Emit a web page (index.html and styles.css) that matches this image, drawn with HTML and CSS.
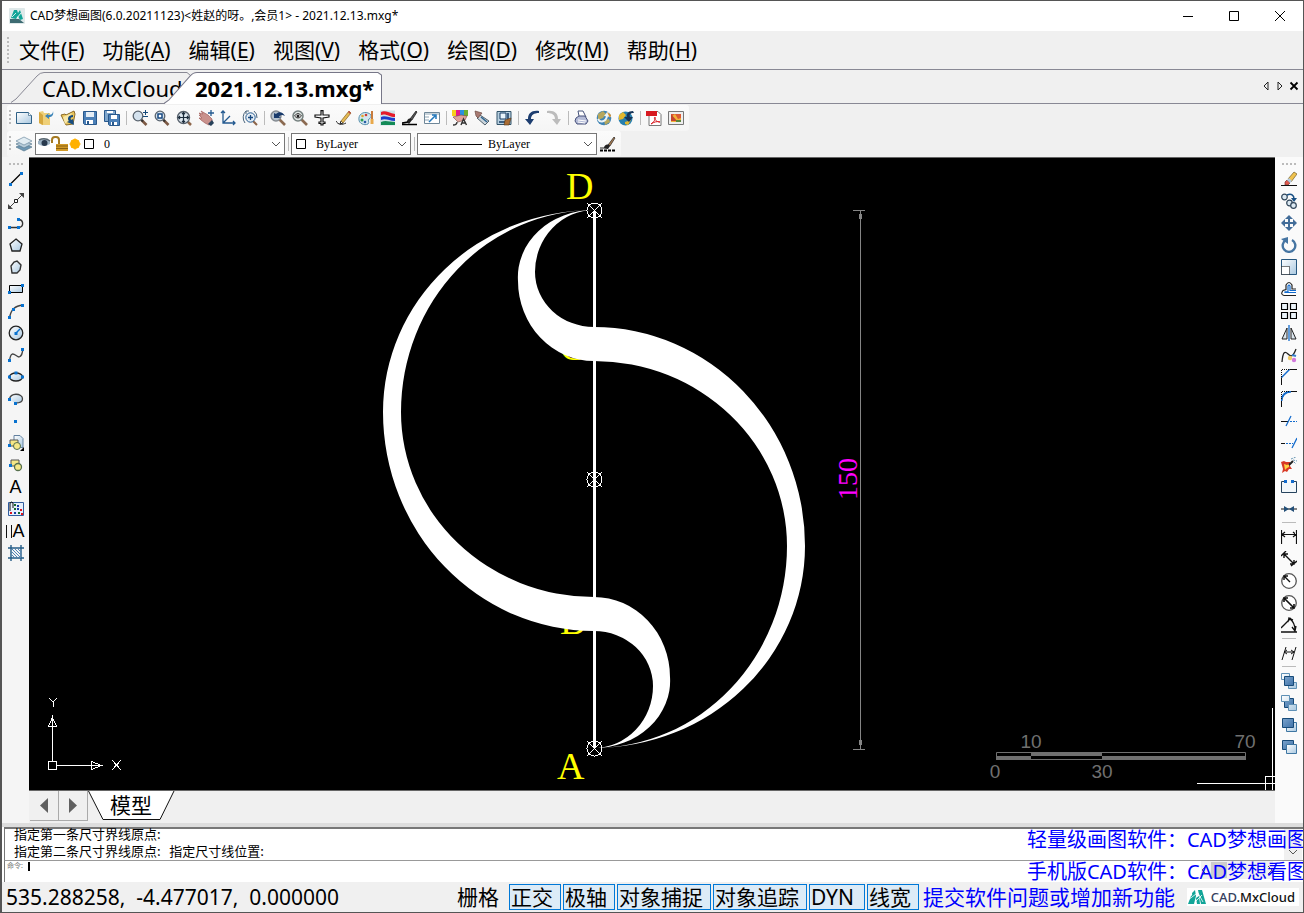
FILE: index.html
```html
<!DOCTYPE html>
<html lang="zh-CN">
<head>
<meta charset="utf-8">
<title>CAD梦想画图</title>
<link rel="stylesheet" href="styles.css">
</head>
<body>
<svg class="defs" aria-hidden="true">
  <defs>
    <linearGradient id="sky" x1="0" y1="0" x2="1" y2="1"><stop offset="0" stop-color="#fff"/><stop offset="1" stop-color="#a9c8e0"/></linearGradient>
    <linearGradient id="steel" x1="0" y1="0" x2="1" y2="1"><stop offset="0" stop-color="#7ba3cc"/><stop offset="1" stop-color="#3f72a8"/></linearGradient>
    <symbol id="lens" viewBox="0 0 16 16"><path d="M9.500 10l5 5" stroke="#7d5a45" stroke-width="2.600"/><path d="M9 9.500l2 2" stroke="#333" stroke-width="2"/><circle cx="6" cy="6" r="4.800" fill="#d4e2ee" stroke="#59636e" stroke-width="1.300"/></symbol>
    <symbol id="logo" viewBox="0 0 18 16"><path d="M0 15L3 7l3-2-1 10zM4 4l3-3 1 6-2 8H5zM10 1h4l4 14h-5zM8 9l3-2 1 8H9z" fill="#12a598"/><path d="M0 11l8-6M7 13l7-7M10 4l5 9" stroke="#fff" stroke-width=".8"/></symbol>
  </defs>
</svg>
<div class="window">
  <header class="titlebar">
    <svg class="appicon" viewBox="0 0 16 16"><rect width="16" height="16" rx="1" fill="#dfe9ea"/><path d="M2 10L5 2h3l1 3 2-3 3 9-3 1-2-4-2 3z" fill="#12a598"/><path d="M1 11h9l5 4H1z" fill="#3d6b72"/><path d="M3 9l4-4M8 10l4-5" stroke="#fff" stroke-width=".8"/></svg>
    <h1 class="title">CAD梦想画图(6.0.20211123)&lt;姓赵的呀。,会员1&gt; - 2021.12.13.mxg*</h1>
    <div class="wincontrols">
      <button aria-label="最小化"><svg viewBox="0 0 12 12"><path d="M1 6.500h10"/></svg></button>
      <button aria-label="最大化"><svg viewBox="0 0 12 12"><path d="M1.500 1.500h9v9h-9z"/></svg></button>
      <button aria-label="关闭"><svg viewBox="0 0 12 12"><path d="M1 1l10 10M11 1L1 11"/></svg></button>
    </div>
  </header>

  <nav class="menubar">
    <span class="grip"></span>
    <button>文件(<u>F</u>)</button><button>功能(<u>A</u>)</button><button>编辑(<u>E</u>)</button><button>视图(<u>V</u>)</button><button>格式(<u>O</u>)</button><button>绘图(<u>D</u>)</button><button>修改(<u>M</u>)</button><button>帮助(<u>H</u>)</button>
  </nav>

  <div class="tabstrip">
    <button class="tab tab-back"><svg viewBox="0 0 180 31" preserveAspectRatio="none"><path d="M0 31L5 27L26 4Q29 .5 33 .5H176L180 4V31z" fill="#f0f0f0"/><path d="M0 30.500L5 27L26 4Q29 .5 33 .5H176L180 4" fill="none" stroke="#888894"/></svg><span>CAD.MxCloud</span></button>
    <button class="tab tab-front"><svg viewBox="0 0 218 31" preserveAspectRatio="none"><path d="M0 31L5 27L26 4Q29 .5 33 .5H214L217.500 3V31z" fill="#fff"/><path d="M0 30.500L5 27L26 4Q29 .5 33 .5H214L217.500 3V31" fill="none" stroke="#777788"/></svg><span>2021.12.13.mxg*</span></button>
    <div class="tabnav">
      <button aria-label="上一个"><svg viewBox="0 0 10 10"><path d="M7 1v8L3 5z" fill="none" stroke="#222"/></svg></button>
      <button aria-label="下一个"><svg viewBox="0 0 10 10"><path d="M3 1v8l4-4z" fill="none" stroke="#222"/></svg></button>
      <button aria-label="关闭标签"><svg viewBox="0 0 10 10"><path d="M1.500 1.500l7 7M8.500 1.500l-7 7" stroke="#000" stroke-width="1.800"/></svg></button>
    </div>
  </div>

  <div class="toolrows">
  <div class="toolrow">
    <div class="toolbar">
      <span class="grip"></span>
      <button aria-label="新建"><svg viewBox="0 0 16 16"><path d="M.5 2.500h12l3 3v8H.5z" fill="url(#sky)" stroke="#2f6187"/><path d="M12.500 2.500v3h3" fill="#fff" stroke="#2f6187" stroke-width=".7"/></svg></button>
      <button aria-label="打开"><svg viewBox="0 0 16 16"><path d="M1 2l4-1 1 2h6v12H4l-3-2z" fill="#efd078"/><path d="M1 2l4 3v10l-4-2z" fill="#d6a83f"/><path d="M15 1c0 3-2 4-5 4l1-2-4 3 4 3v-2c3 0 5-2 4-6z" fill="#3a83b8"/></svg></button>
      <button aria-label="打开云图"><svg viewBox="0 0 16 16"><path d="M1 5l4-1 1 1 8-4 1 3-2 10-7 1z" fill="#e8c55e" stroke="#8b6a25"/><path d="M3 7l9-4-3 7-4 4z" fill="#f8e8a8"/><path d="M13 5c-5 0-6 4-4 6l-2 1 7 3-1-6-2 1c-1-2 0-3 2-3z" fill="#164c80"/></svg></button>
      <button aria-label="保存"><svg viewBox="0 0 16 16"><path d="M1.500 1.500h13v13h-12l-1-1z" fill="#4b80b8" stroke="#28588c"/><path d="M4 2h8v5H4z" fill="#e4edf5"/><path d="M4 10h7v4H4z" fill="#fff"/><path d="M5 11h2v3H5z" fill="#28588c"/></svg></button>
      <button aria-label="另存为"><svg viewBox="0 0 16 16"><path d="M.5 .5h11v11H.5z" fill="#7fa6cc" stroke="#28588c"/><path d="M3 1h6v2H3z" fill="#fff"/><path d="M4.500 4.500h11v11h-10l-1-1z" fill="#4b80b8" stroke="#28588c"/><path d="M7 5h6v4H7zM7 12h6v3H7z" fill="#fff"/><path d="M8 12h2v3H8z" fill="#28588c"/></svg></button>
      <i class="sep"></i>
      <button aria-label="实时缩放"><svg viewBox="0 0 16 16"><use href="#lens"/><path d="M11 2.500h5M13.500 0v5M11 6.500h5" stroke="#164a7a"/></svg></button>
      <button aria-label="窗口缩放"><svg viewBox="0 0 16 16"><use href="#lens"/><path d="M4 4h4v4H4z" fill="#fff" stroke="#174a82" stroke-width="1.500"/></svg></button>
      <button aria-label="范围缩放"><svg viewBox="0 0 16 16"><path d="M11 11l4 4" stroke="#8d6549" stroke-width="2.500"/><circle cx="7.500" cy="7.500" r="6" fill="#dce6ee" stroke="#555f6a" stroke-width="1.400"/><path d="M7.500 3v9M3 7.500h9M6 4l1.500-1.500L9 4M6 11l1.500 1.500L9 11M4 6L2.500 7.500L4 9M11 6l1.500 1.500L11 9" fill="none" stroke="#1b2c3c" stroke-width="1.200"/></svg></button>
      <button aria-label="平移"><svg viewBox="0 0 16 16"><path d="M1 3l4 1-2-3 7 4 1 1 3 3 0 4-3 2-4-2-4-3-2-2 3 0-3-3 2 0z" fill="#c9918c" stroke="#a35f5b" stroke-width=".7"/><path d="M13 0v6M10 3h6" stroke="#245a90" stroke-width="1.300"/><path d="M10 14l4-4 2 3-3 3z" fill="#27415a"/></svg></button>
      <button aria-label="坐标系"><svg viewBox="0 0 16 16"><path d="M3 1v12h12M3 13l7-7M1 3l2-2 2 2M13 11l2 2-2 2" fill="none" stroke="#245a90" stroke-width="1.300"/></svg></button>
      <button aria-label="缩放上一个"><svg viewBox="0 0 16 16"><path d="M11 11l4 4" stroke="#8d6549" stroke-width="2"/><circle cx="8.500" cy="7.500" r="4.700" fill="#e4edf4" stroke="#245a90"/><path d="M8.500 5v5M6 7.500h5" stroke="#174a82" stroke-width="1.300"/><path d="M4 1a9 9 0 0 0-1 12M4 1h3M4 1v3M12 1a8 8 0 0 1 3 7" fill="none" stroke="#49647c"/></svg></button>
      <i class="sep"></i>
      <button aria-label="返回视图"><svg viewBox="0 0 16 16"><path d="M9 9l6 6" stroke="#8b6a51" stroke-width="2.600"/><circle cx="6" cy="6" r="5" fill="#b6c3ce" stroke="#858b91" stroke-width="1.400"/><path d="M4 8L4 3l2 1c3-3 7-2 9 2-3-2-5-1-6 1l2 1z" fill="#193b6c"/></svg></button>
      <button aria-label="动态观察"><svg viewBox="0 0 16 16"><path d="M9 9l6 6" stroke="#8b6a51" stroke-width="2.600"/><circle cx="6" cy="6" r="5" fill="#e2e8e6" stroke="#75807f" stroke-width="1.500"/><path d="M2.500 6q3.500-5 7 0q-3.500 4-7 0z" fill="#fff" stroke="#333"/><circle cx="6" cy="6" r="1.500" fill="#222"/></svg></button>
      <button aria-label="飞行"><svg viewBox="0 0 16 16"><path d="M7 .6h2V5h6v2l-6 1v4h2v1.500H9V15H7v-1.500H5V12h2V8L1 7V5h6z" fill="#fff" stroke="#111" stroke-width="1.200"/></svg></button>
      <button aria-label="铅笔"><svg viewBox="0 0 16 16"><path d="M5 11L13 1l2 2-8 10z" fill="#e4ba54" stroke="#85601f" stroke-width=".7"/><path d="M12 2l1-1 2 2-1 1z" fill="#b44"/><path d="M5 11l-1 3 3-1M0 11c2 4 6 4 10 2" fill="none" stroke="#222"/></svg></button>
      <button aria-label="调色板"><svg viewBox="0 0 16 16"><path d="M1 10C0 5 5 1 10 3c4 1 4 5 1 6-2 1 1 3-1 5-4 2-9-1-9-4z" fill="#d3e6ef" stroke="#5690ad"/><circle cx="4" cy="10" r="1.500" fill="#2b9d52"/><circle cx="4.500" cy="6" r="1.300" fill="#e4a52b"/><circle cx="8" cy="5" r="1.300" fill="#cc3d35"/><circle cx="7" cy="12" r="1.300" fill="#265ca6"/><path d="M14 1v8" stroke="#c87b3d" stroke-width="2"/><path d="M14 9v5" stroke="#e8a84a" stroke-width="3"/></svg></button>
      <button aria-label="图层颜色"><svg viewBox="0 0 16 16"><path d="M0 .5h15v15H0z" fill="#cfe2e8"/><path d="M1 2c4-2 8 1 14 2v3C9 7 6 3 1 5z" fill="#e51b2b"/><path d="M1 7c4-2 8 1 14 1v3C9 11 6 8 1 10z" fill="#1d3dcc"/><path d="M1 12c5-2 8 0 14 0v3H1z" fill="#138a57"/></svg></button>
      <button aria-label="笔刷"><svg viewBox="0 0 16 16"><path d="M8 9l6-8 1 1-5 8z" fill="#555" stroke="#111" stroke-width=".7"/><path d="M5 12c0-3 3-5 5-2l-3 4z" fill="#222"/><path d="M0 14.500h15M0 13l6-1" stroke="#000" stroke-width="1.500"/></svg></button>
      <button aria-label="窗口"><svg viewBox="0 0 16 16"><path d="M.5 2.500h15v11H.5z" fill="#fff" stroke="#6f8798"/><path d="M1 4h14M1 7h4M1 10h4" stroke="#8fa6b5"/><path d="M5 12l6-6M8 5h4v4" fill="none" stroke="#2277bb" stroke-width="1.500"/></svg></button>
      <i class="sep"></i>
      <button aria-label="选择颜色"><svg viewBox="0 0 16 16"><path d="M0 0h4v6H0z" fill="#f6cf1b"/><path d="M4 0h4v6H4z" fill="#e5188c"/><path d="M8 0h4v6H8z" fill="#2a8fe0"/><path d="M12 0h4v6h-4z" fill="#6cae2f"/><path d="M1 7l8-2 6 1-2 4-7 2z" fill="#e1a19a" stroke="#754944" stroke-width=".6"/><path d="M9 15l2.500-6 3 6M10 13h3.500M1 15c3 0 4-1 4-3" fill="none" stroke="#333" stroke-width="1.400"/></svg></button>
      <button aria-label="橡皮"><svg viewBox="0 0 16 16"><path d="M6 5l9 6-4 4-8-7z" fill="#cbd5dc" stroke="#52616b"/><path d="M1 1l7 2-4 5-2-2z" fill="#a87a72" stroke="#6b4a44" stroke-width=".7"/><path d="M7 7l6 5" stroke="#2c638f" stroke-width="1.500"/></svg></button>
      <button aria-label="特性"><svg viewBox="0 0 16 16"><path d="M1 1.500h14v13H1z" fill="#b6cfdf" stroke="#31536a"/><path d="M4 3h6v6H4z" fill="#e9f5fb" stroke="#163b63"/><path d="M12 3v7M3 12h6" stroke="#163b63" stroke-width="1.500"/><path d="M9 10l6-2-2 7H8z" fill="#a96c34" stroke="#513316" stroke-width=".6"/></svg></button>
      <i class="sep"></i>
      <button aria-label="撤销"><svg viewBox="0 0 16 16"><path d="M15 1C8 0 4 3 4 9H1l5 6 4-6H7c0-4 3-6 8-6z" fill="#1d3e70"/></svg></button>
      <button aria-label="重做"><svg viewBox="0 0 16 16"><path d="M1 1c7-1 11 2 11 8h3l-4 6-5-6h3C9 5 6 3 1 3z" fill="#bcbcbc"/></svg></button>
      <i class="sep"></i>
      <button aria-label="打印"><svg viewBox="0 0 16 16"><path d="M5 6L4 1h5l3 6" fill="#fff" stroke="#47547b"/><path d="M2 8l3-2h6l3 5-2 3-9 0-2-3z" fill="#b4bbd7" stroke="#46507a"/><path d="M4 10l8 1M4 12l7 1" stroke="#fff"/></svg></button>
      <button aria-label="网络上传"><svg viewBox="0 0 16 16"><circle cx="8" cy="8" r="7.300" fill="#3f83b4"/><path d="M2 4l5-3 3 3-3 4-5 2zM8 10l5-1 1 3-5 3z" fill="#b6a75d"/><path d="M2 9c2 4 8 3 9-3" fill="none" stroke="#edf3f4" stroke-width="2"/><path d="M8 6l4-5 3 6z" fill="#edf3f4"/><path d="M11 2l4 3-1 3z" fill="#da8d21"/></svg></button>
      <button aria-label="网络下载"><svg viewBox="0 0 16 16"><circle cx="7.500" cy="8.500" r="7" fill="#277fae"/><path d="M1 5l4-3 3 3-3 4-4 1zM7 12l6-2-3 5-3-1z" fill="#e3b72d"/><path d="M15 1c-5 0-7 3-6 6H6l5 5 4-5h-3c-1-2 0-4 4-4z" fill="#173458"/></svg></button>
      <i class="sep"></i>
      <button aria-label="导出PDF"><svg viewBox="0 0 16 16"><path d="M3 1.500h9l3 3v11H3z" fill="#fff" stroke="#777"/><path d="M0 1h11v5H0z" fill="#d71920"/><path d="M5 14c4-3 5-6 4-7-2 1 1 5 5 5-3-1-6 0-9 2z" fill="none" stroke="#d71920"/></svg></button>
      <button aria-label="导出图片"><svg viewBox="0 0 16 16"><path d="M.5 1.500h15v13H.5z" fill="#eee" stroke="#777"/><path d="M3 4h10v8H3z" fill="#dc5a34"/><path d="M3 7l4-3 3 5 3-1v4H3z" fill="#f2b238"/><path d="M3 4l6 7H3z" fill="#c4432f"/><path d="M8 10h5v2H8z" fill="#5d873b"/></svg></button>
    </div>
  </div>
  <div class="toolrow">
    <div class="toolbar">
      <span class="grip"></span>
      <button aria-label="图层管理"><svg viewBox="0 0 16 16"><path d="M0 11l8-3 8 3-8 4z" fill="#6f98b5" stroke="#58788e" stroke-width=".7"/><path d="M0 8l8-3 8 3-8 4z" fill="#b7ccda" stroke="#58788e" stroke-width=".7"/><path d="M0 5l8-4 8 4-8 4z" fill="#e1ecf2" stroke="#6f8da0" stroke-width=".7"/></svg></button>
      <div class="combo combo-layer">
        <svg class="combo-art" viewBox="0 0 58 16"><path d="M0 5q7-4 12 0v3q-6 4-12 0z" fill="#9eb4c6"/><circle cx="6.500" cy="7" r="3" fill="#28394d"/><path d="M1 4q6-3 11 1" fill="none" stroke="#58656f" stroke-width="1.500"/><path d="M14 7V4q0-3 3-3h1q3 0 3 3v4" fill="none" stroke="#a57a22" stroke-width="2"/><path d="M18 8h12v7H18z" fill="#d29a27"/><path d="M18 10h12M18 12.500h12" stroke="#8b6213"/><path d="M37 2v12M31 8h12M33 4l8 8M41 4l-8 8" stroke="#ffc94a"/><circle cx="37" cy="8" r="5" fill="#ffb100"/><path d="M46.500 3.500h9v9h-9z" fill="#fff" stroke="#000"/></svg>
        <select aria-label="图层"><option>0</option></select>
        <svg class="chev" viewBox="0 0 10 6"><path d="M1 1l4 4 4-4"/></svg>
      </div>
      <i class="sep"></i>
      <div class="combo combo-color">
        <svg class="combo-art" viewBox="0 0 16 16"><path d="M2.500 3.500h9v9h-9z" fill="#fff" stroke="#000"/></svg>
        <select aria-label="颜色"><option>ByLayer</option></select>
        <svg class="chev" viewBox="0 0 10 6"><path d="M1 1l4 4 4-4"/></svg>
      </div>
      <i class="sep"></i>
      <div class="combo combo-line">
        <svg class="combo-art" viewBox="0 0 62 16"><path d="M0 8.500h62" stroke="#000"/></svg>
        <select aria-label="线型"><option>ByLayer</option></select>
        <svg class="chev" viewBox="0 0 10 6"><path d="M1 1l4 4 4-4"/></svg>
      </div>
      <button aria-label="线宽设置"><svg viewBox="0 0 16 16"><path d="M8 9l6-8 1 1-5 8z" fill="#a87b50" stroke="#222" stroke-width=".7"/><path d="M4 12c0-3 4-5 6-2l-2 3z" fill="#222"/><path d="M0 12h8" stroke="#222"/><path d="M0 14.500h15" stroke="#000" stroke-width="2" stroke-dasharray="3 1"/></svg></button>
    </div>
  </div>
  </div>

  <main class="work">
    <aside class="side side-left">
      <span class="hgrip"></span>
      <button aria-label="直线"><svg viewBox="0 0 16 16"><path d="M2 13.500L13 2.500" stroke="#000" stroke-width="1.300"/><path d="M1 12h3v3H1zM12 1h3v3h-3z" fill="#0872d0"/></svg></button>
      <button aria-label="构造线"><svg viewBox="0 0 16 16"><path d="M1 15L15 1" stroke="#444"/><path d="M0 11v5h5zM11 0h5v5z" fill="#444"/><path d="M6.500 6.500h3v3h-3z" fill="#fff" stroke="#222"/></svg></button>
      <button aria-label="多段线"><svg viewBox="0 0 16 16"><path d="M1 12.500h9M10 4.500c6 0 6 7 1 8" fill="none" stroke="#333" stroke-width="1.400"/><path d="M0 11h3v3H0zM9 11h3v3H9zM9 3h3v3H9z" fill="#0872d0"/></svg></button>
      <button aria-label="正多边形"><svg viewBox="0 0 16 16"><path d="M8 2l6 5-2 7H4L2 7z" fill="url(#sky)" stroke="#222" stroke-width="1.300"/></svg></button>
      <button aria-label="多边形"><svg viewBox="0 0 16 16"><path d="M9 2l4 4-1 5-3 3-5 0-1-7 3-4z" fill="url(#sky)" stroke="#333" stroke-width="1.400"/></svg></button>
      <button aria-label="矩形"><svg viewBox="0 0 16 16"><path d="M1.500 4.500h13v7h-13z" fill="url(#sky)" stroke="#000"/><path d="M0 10h3v3H0zM13 3h3v3h-3z" fill="#0872d0"/></svg></button>
      <button aria-label="圆弧"><svg viewBox="0 0 16 16"><path d="M1.500 15C3 6 7 3 15 2" fill="none" stroke="#444" stroke-width="1.400"/><path d="M0 13h3v3H0zM4 5h3v3H4zM13 1h3v3h-3z" fill="#0872d0"/></svg></button>
      <button aria-label="圆"><svg viewBox="0 0 16 16"><circle cx="8" cy="8" r="6.800" fill="url(#sky)" stroke="#222" stroke-width="1.300"/><path d="M8 8l4-4" stroke="#0872d0" stroke-width="1.500"/><path d="M6.500 7h3v3h-3z" fill="#0872d0"/></svg></button>
      <button aria-label="样条曲线"><svg viewBox="0 0 16 16"><path d="M1.500 14C3 1 8 10 11 10c3-1 3-3 4-8" fill="none" stroke="#444" stroke-width="1.300"/><path d="M0 12h3v3H0zM13 1h3v3h-3z" fill="#0872d0"/></svg></button>
      <button aria-label="椭圆"><svg viewBox="0 0 16 16"><ellipse cx="8" cy="8" rx="6.500" ry="4" fill="url(#sky)" stroke="#222" stroke-width="1.300"/><path d="M0 6.500h3v3H0zM13 6.500h3v3h-3zM6.500 2.500h3v3h-3z" fill="#0872d0"/></svg></button>
      <button aria-label="椭圆弧"><svg viewBox="0 0 16 16"><path d="M1.500 9C1 1 15 2 14.500 8c0 3-4 4-7 4" fill="url(#sky)" stroke="#444" stroke-width="1.300"/><path d="M0 7h3v3H0zM6 11h3v3H6z" fill="#0872d0"/></svg></button>
      <button aria-label="点"><svg viewBox="0 0 16 16"><path d="M6 7h3v3H6z" fill="#0872d0"/></svg></button>
      <button aria-label="创建块"><svg viewBox="0 0 16 16"><path d="M6 .5h6l3 3v9H6z" fill="url(#sky)" stroke="#6381a0"/><path d="M2 5h8v6H2z" fill="#f5e887" stroke="#555"/><circle cx="9" cy="11" r="3.500" fill="#f5e887" stroke="#56704e"/><path d="M0 9h3v3H0z" fill="#0872d0"/><path d="M16 12v4h-4z"/></svg></button>
      <button aria-label="插入块"><svg viewBox="0 0 16 16"><path d="M3 3h8v6H3z" fill="#f5e887" stroke="#555"/><circle cx="10" cy="10" r="3.500" fill="#f5e887" stroke="#56704e" stroke-width="1.300"/><path d="M1 7h3v3H1z" fill="#0872d0"/></svg></button>
      <button class="glyph" aria-label="单行文字">A</button>
      <button aria-label="图案"><svg viewBox="0 0 16 16"><path d="M.5 1.500h15v13H.5z" fill="#e7effc" stroke="#315d9e"/><path d="M2 10V2q2-2 3 0v5" fill="none" stroke="#111"/><path d="M6 3h2v2H6zM6 7h2v2H6zM10 11h2v2h-2z" fill="#146a2b"/><path d="M9 4h2v2H9zM9 7h2v2H9zM6 11h2v2H6z" fill="#153ba2"/><path d="M12 8h2v2h-2zM2 11h2v2H2zM13 12h2v2h-2z" fill="#df141c"/></svg></button>
      <button class="glyph mtext" aria-label="多行文字">A</button>
      <button aria-label="填充"><svg viewBox="0 0 16 16"><path d="M3 0v16M13 0v16M0 3h16M0 13h16" stroke="#245c87" stroke-width="1.400"/><path d="M4 4l9 9M4 7l6 6M4 10l3 3M7 4l6 6M10 4l3 3" stroke="#5184b7"/></svg></button>
    </aside>

    <div class="center">
      <svg class="canvas" viewBox="29 158 1246 632" role="img" aria-label="图纸">
        <g class="note"><text x="566" y="199">D</text><text x="560" y="360">C</text><text x="560" y="634">B</text><text x="557" y="779">A</text></g>
        <path d="M594.500 211V748" stroke="#fff" stroke-width="3"/>
        <path id="swirl" fill="#fff" d="M594 210A76 67 0 0 0 518 281A76 80 0 0 0 594 361A193 185 0 0 1 787 546A193 202 0 0 1 594 748A211 202 0 0 0 805 546A211 219 0 0 0 594 327A59 55 0 0 1 535 272A59 62 0 0 1 594 210z"/>
        <use href="#swirl" transform="rotate(180 594 479)"/>
        <g class="thin">
          <g id="mark"><circle cx="594.500" cy="210.500" r="7.500"/><path d="M587 203l15 15M602 203l-15 15"/></g>
          <use href="#mark" y="269"/><use href="#mark" y="538"/>
          <path d="M52.500 761.500V715M48.500 726.500h8l-4-9zM56.500 765.500H102M91.500 761.500v8l10-4zM48.500 761.500h8v8h-8zM49 698l4 4 4-4M53 702v5M112 760l9 10M121 760l-9 10"/>
        </g>
        <path d="M860.500 210V749M853 210.500h12M853 749.500h12" stroke="#858585"/>
        <path d="M859 214h3v5h-3zM859 740h3v5h-3z" fill="#858585"/>
        <text class="dim" transform="translate(857 500) rotate(-90)">150</text>
        <path d="M996.500 752.500h249v7h-249z" fill="#000" stroke="#707070"/>
        <path d="M996 756h35v4h-35zM1031 752h71v4h-71zM1102 756h144v4h-144z" fill="#707070"/>
        <g class="scale"><text x="1031" y="748">10</text><text x="1245" y="748">70</text><text x="995" y="778">0</text><text x="1102" y="778">30</text></g>
        <path class="thin" d="M1272.500 708V790M1197 783.500h78M1265.500 790v-13.500H1275"/>
      </svg>
      <div class="models">
        <button class="arrow" aria-label="向左"><svg viewBox="0 0 10 16"><path d="M9 0v15L1 7.500z"/></svg></button>
        <button class="arrow" aria-label="向右"><svg viewBox="0 0 10 16"><path d="M1 0v15l8-7.500z"/></svg></button>
        <button class="model"><svg viewBox="0 0 88 29" preserveAspectRatio="none"><path d="M.5 0L15 28.500h57L86 0z" fill="#fff"/><path d="M.5 0L15 28.500h57L86 0" fill="none" stroke="#111"/></svg><span>模型</span></button>
      </div>
    </div>

    <aside class="side side-right">
      <span class="hgrip"></span>
      <button aria-label="删除"><svg viewBox="0 0 16 16"><path d="M7 8L13 1l3 2-6 8z" fill="#f0c24d" stroke="#715d28" stroke-width=".7"/><path d="M4 11l2-2 3 3-2 2H4z" fill="#df5a4e" stroke="#733" stroke-width=".7"/><path d="M6 9l2-2 3 3-2 2z" fill="#b5cadd"/><path d="M0 14.500h16" stroke="#111"/></svg></button>
      <button aria-label="复制"><svg viewBox="0 0 16 16"><g fill="#dce9f2" stroke="#31465a" stroke-width="1.200"><circle cx="3.500" cy="4" r="2.800"/><circle cx="8.500" cy="10" r="2.800"/><circle cx="12.500" cy="12.500" r="2.800"/></g><path d="M6 2c5-2 7 1 7 4" fill="none" stroke="#174f83" stroke-width="1.500"/><path d="M10 5h6l-3 4z" fill="#174f83"/></svg></button>
      <button aria-label="移动"><svg viewBox="0 0 16 16"><path d="M8 0l4 4H9v3h3V4l4 4-4 4V9H9v3h3l-4 4-4-4h3V9H4v3L0 8l4-4v3h3V4H4z" fill="#426d99"/></svg></button>
      <button aria-label="旋转"><svg viewBox="0 0 16 16"><path d="M5 3a6.300 6.300 0 1 0 6 0" fill="none" stroke="#4675a2" stroke-width="2.400"/><path d="M0 2l7-2v7z" fill="#4675a2"/></svg></button>
      <button aria-label="缩放"><svg viewBox="0 0 16 16"><path d="M.5 .5h15v15H.5z" fill="url(#sky)" stroke="#26577f"/><path d="M.5 7.500h8v8h-8z" fill="#fff" stroke="#000" stroke-dasharray="1 1"/></svg></button>
      <button aria-label="偏移"><svg viewBox="0 0 16 16"><path d="M15 14.500H3q-4-1-1-5l3-1V4q3-5 6 0v4h4" fill="#fff" stroke="#222" stroke-width="1.200"/><path d="M15 11.500H4q-1-1 3-1V5q1-2 2 0v4.500h6" fill="none" stroke="#126bcd" stroke-width="1.200"/></svg></button>
      <button aria-label="阵列"><svg viewBox="0 0 16 16"><path d="M.5 .5h6v6h-6zM9.500 .5h6v6h-6zM.5 9.500h6v6h-6zM9.500 9.500h6v6h-6z" fill="#edf5fb" stroke="#000" stroke-width="1.200"/></svg></button>
      <button aria-label="镜像"><svg viewBox="0 0 16 16"><path d="M6 3v11H1zM10 3v11h5z" fill="#dce6ee" stroke="#222"/><path d="M8 0v16" stroke="#126bcd" stroke-width="1.300"/></svg></button>
      <button aria-label="编辑曲线"><svg viewBox="0 0 16 16"><path d="M1 15C2 4 4 4 7 7s5 3 8-5" fill="none" stroke="#222" stroke-width="1.300"/><circle cx="9" cy="11" r="2.200" fill="#f0ca66"/><circle cx="13" cy="13" r="2.200" fill="#d27adc"/><path d="M11 8l4 1" stroke="#357fca" stroke-width="2"/></svg></button>
      <button aria-label="倒角"><svg viewBox="0 0 16 16"><path d="M.5 16V8.500l8-8H16" fill="none" stroke="#111"/><path d="M.5 8.500l8-8" stroke="#126bcd" stroke-width="1.500"/><path d="M.5 8V.5H8" fill="none" stroke="#111" stroke-dasharray="1 1"/></svg></button>
      <button aria-label="圆角"><svg viewBox="0 0 16 16"><path d="M.5 16v-6Q1 1 10 .5h6" fill="none" stroke="#111"/><path d="M.5 10Q1 1 10 .5" fill="none" stroke="#126bcd" stroke-width="1.800"/><path d="M.5 8V.5H8" fill="none" stroke="#111" stroke-dasharray="1 1"/></svg></button>
      <button aria-label="修剪"><svg viewBox="0 0 16 16"><path d="M0 8.500h7" stroke="#111"/><path d="M9 8.500h7" stroke="#126bcd" stroke-dasharray="2 1"/><path d="M5 13l5-10" stroke="#126bcd" stroke-width="1.300"/></svg></button>
      <button aria-label="延伸"><svg viewBox="0 0 16 16"><path d="M0 8.500h4" stroke="#111"/><path d="M5 8.500h7" stroke="#126bcd" stroke-dasharray="2 1"/><path d="M11 13l5-10" stroke="#126bcd" stroke-width="1.300"/></svg></button>
      <button aria-label="分解"><svg viewBox="0 0 16 16"><path d="M0 5l3-1 2 1 4 0 0 4 2 3-3 0-2 3-2-1-3 2 1-4z" fill="#d83925"/><path d="M3 7l3 1 2-1 0 3-2 1-2 2z" fill="#ffd342"/><path d="M8 8l4-4" stroke="#222" stroke-width="2"/><path d="M10 2l5-2M12 3l4 1M13 5l2 2" stroke="#6b98b4" stroke-dasharray="2 1"/></svg></button>
      <button aria-label="打断"><svg viewBox="0 0 16 16"><path d="M4 2.500H.5v11h15v-11H12" fill="#f2f7fa" stroke="#26435d"/><path d="M3 1h3v3H3zM10 1h3v3h-3z" fill="#126bcd"/></svg></button>
      <button aria-label="合并"><svg viewBox="0 0 16 16"><path d="M0 8h16" stroke="#111"/><path d="M3 5l5 3-5 3zM13 5L8 8l5 3z" fill="#245078"/></svg></button>
      <i class="hsep"></i>
      <button aria-label="线性标注"><svg viewBox="0 0 16 16"><path d="M.5 1v14M15.500 1v14M1 5.500h14M4 3L1 5.500L4 8M12 3l3 2.500L12 8" fill="none" stroke="#111" stroke-width="1.200"/></svg></button>
      <button aria-label="对齐标注"><svg viewBox="0 0 16 16"><path d="M0 5l5-5M10 15l6-5M3 3l10 10M3 7V3h4M13 9v4H9" fill="none" stroke="#111" stroke-width="1.400"/></svg></button>
      <button aria-label="半径标注"><svg viewBox="0 0 16 16"><circle cx="8" cy="8" r="7.300" fill="#fff" stroke="#555" stroke-width="1.300"/><path d="M9 9L3 3M3 7V3h4" fill="none" stroke="#111" stroke-width="1.400"/></svg></button>
      <button aria-label="直径标注"><svg viewBox="0 0 16 16"><circle cx="8" cy="8" r="7.300" fill="#fff" stroke="#555" stroke-width="1.300"/><path d="M3 3l10 10M3 7V3h4M13 9v4H9" fill="none" stroke="#111" stroke-width="1.600"/></svg></button>
      <button aria-label="角度标注"><svg viewBox="0 0 16 16"><path d="M0 15h16M0 11L10 1M9 2c4 3 5 6 5 11M7 5l1-4 4 2M11 10l3 4 1-5" fill="none" stroke="#111" stroke-width="1.300"/></svg></button>
      <i class="hsep"></i>
      <button aria-label="标注样式"><svg viewBox="0 0 16 16"><path d="M1 15L5 2M11 15l4-13M3 7h10M6 5L3 7l3 2M10 5l3 2-3 2" fill="none" stroke="#111"/></svg></button>
      <i class="hsep"></i>
      <button aria-label="前置"><svg viewBox="0 0 16 16"><path d="M.5 .5h8v6h-8zM7.500 9.500h8v6h-8z" fill="url(#sky)" stroke="#5f90b5"/><path d="M3.500 3.500h9v9h-9z" fill="url(#steel)" stroke="#174a78"/></svg></button>
      <button aria-label="后置"><svg viewBox="0 0 16 16"><path d="M3.500 3.500h9v9h-9z" fill="url(#steel)" stroke="#174a78"/><path d="M.5 .5h8v6h-8zM7.500 9.500h8v6h-8z" fill="url(#sky)" stroke="#5f90b5"/></svg></button>
      <button aria-label="置于对象之上"><svg viewBox="0 0 16 16"><path d="M5.500 5.500h10v9h-10z" fill="url(#sky)" stroke="#3e76a2"/><path d="M1.500 1.500h11v9h-11z" fill="url(#steel)" stroke="#174a78"/></svg></button>
      <button aria-label="置于对象之下"><svg viewBox="0 0 16 16"><path d="M1.500 1.500h11v9h-11z" fill="url(#steel)" stroke="#174a78"/><path d="M5.500 5.500h10v9h-10z" fill="url(#sky)" stroke="#3e76a2"/></svg></button>
    </aside>
  </main>

  <section class="command">
    <div class="history">
      <div class="log"><p>指定第一条尺寸界线原点:</p><p>指定第二条尺寸界线原点:&nbsp;&nbsp; 指定尺寸线位置:</p></div>
      <div class="vscroll"><svg viewBox="0 0 10 6"><path d="M1 5l4-4 4 4"/></svg><svg viewBox="0 0 10 6"><path d="M1 1l4 4 4-4"/></svg></div>
    </div>
    <div class="prompt">
      <label for="cmd">命令:</label><i class="caret"></i><input id="cmd" type="text">
      <div class="hscroll"><svg viewBox="0 0 6 10"><path d="M5 1L1 5l4 4"/></svg><i></i><svg viewBox="0 0 6 10"><path d="M1 1l4 4-4 4"/></svg></div>
    </div>
    <div class="promo"><a href="#">轻量级画图软件：CAD梦想画图</a><a href="#">手机版CAD软件：CAD梦想看图</a></div>
  </section>

  <footer class="status">
    <span class="coords">535.288258,&nbsp; -4.477017,&nbsp; 0.000000</span>
    <button>栅格</button><button class="on">正交</button><button class="on">极轴</button><button class="on">对象捕捉</button><button class="on">对象追踪</button><button class="on dyn">DYN</button><button class="on">线宽</button>
    <a class="feedback" href="#">提交软件问题或增加新功能</a>
    <a class="brand" href="#"><svg viewBox="0 0 18 16"><use href="#logo"/></svg><span><em>CAD</em>.MxCloud</span></a>
  </footer>
</div>
</body>
</html>
```

FILE: styles.css
```css
* { box-sizing: border-box; }
body { margin: 0; font-family: "Noto Sans", "Noto Sans CJK SC", sans-serif; color: #000; background: #f0f0f0; }
button { margin: 0; padding: 0; border: 0; background: none; font: inherit; color: inherit; }
p, h1 { margin: 0; }
a { text-decoration: none; }
svg { display: block; }
.defs { position: absolute; width: 0; height: 0; }

.window { display: flex; flex-direction: column; min-height: 100vh; border: 1px solid #555; border-left: 2px solid #555; overflow: hidden; }

.titlebar { display: flex; align-items: center; height: 30px; background: #fff; padding-left: 7px; }
.appicon { width: 16px; height: 16px; margin-right: 5px; }
.title { flex: 1; font-size: 12px; font-weight: 400; line-height: 16px; white-space: nowrap; }
.wincontrols { display: flex; }
.wincontrols button { width: 46px; height: 30px; display: grid; place-items: center; }
.wincontrols svg { width: 12px; height: 12px; fill: none; stroke: #000; }

.menubar { display: flex; align-items: center; height: 38px; padding-left: 5px; background: #f0f0f0; font-size: 21px; line-height: 30px; }
.menubar button { margin-right: 18px; white-space: nowrap; }
.menubar u { text-underline-offset: 2px; text-decoration-thickness: 1px; }
.menubar .grip { height: 26px; margin-right: 10px; }
.grip { flex: none; width: 2px; height: 16px; background: repeating-linear-gradient(#bbb 0 2px, transparent 2px 4px); }

.tabstrip { display: flex; align-items: flex-end; height: 35px; padding-left: 9px; border-top: 1px solid #888894; border-bottom: 1px solid #888894; background: #f0f0f0; font-size: 22px; line-height: 28px; }
.tab { position: relative; height: 31px; padding: 0 7px 0 31px; text-align: left; white-space: nowrap; }
.tab svg { position: absolute; inset: 0; width: 100%; height: 100%; }
.tab span { position: relative; }
.tab-back { width: 180px; margin-right: -27px; }
.tab-front { width: 218px; font-weight: 700; margin-bottom: -1px; height: 32px; }
.tab-back span { z-index: 0; }
.tab-front { z-index: 1; }
.tabnav { display: flex; margin-left: auto; padding: 0 3px 12px 0; gap: 3px; }
.tabnav svg { width: 10px; height: 10px; }
.tabnav button { width: 11px; height: 10px; }

.toolrows { padding-top: 1px; }
.toolrow { display: flex; height: 26px; padding-left: 5px; background: #f0f0f0; }
.toolbar { display: flex; align-items: center; padding: 0 2px; border-radius: 3px; background: linear-gradient(#fbfbfb, #f5f5f5); }
.toolbar button { display: grid; place-items: center; width: 22px; height: 22px; }
.toolbar .grip { margin-right: 2px; }
.toolbar svg { width: 16px; height: 16px; }
.sep { width: 1px; height: 14px; margin: 0 2px 0 3px; background: #bbb; }
.combo { display: flex; position: relative; align-items: center; height: 22px; border: 1px solid #777; background: #fff; }
.combo select { position: absolute; inset: 0; width: 100%; height: 20px; border: 0; background: transparent; appearance: none; font: 12px "Liberation Serif", serif; }
.combo .combo-art { width: auto; height: 16px; margin-left: 2px; }
.combo .chev { width: 10px; height: 6px; margin: 0 3px 0 auto; }
.chev, .vscroll svg, .hscroll svg { fill: none; stroke: #555; }
.combo-layer { width: 250px; }
.combo-layer select { padding-left: 68px; }
.combo-color { width: 120px; }
.combo-color select { padding-left: 24px; }
.combo-line { width: 180px; }
.combo-line select { padding-left: 70px; }

.work { flex: 1; display: flex; min-height: 0; }
.side { flex: none; display: flex; flex-direction: column; align-items: center; background: #f5f5f5; padding-top: 6px; }
.side-left { width: 27px; }
.side-right { width: 28px; background: #fafafa; }
.side button { display: grid; place-items: center; width: 22px; height: 22px; }
.side svg { width: 16px; height: 16px; }
.hgrip { width: 14px; height: 2px; margin-bottom: 3px; background: repeating-linear-gradient(90deg, #bbb 0 2px, transparent 2px 4px); }
.hsep { width: 14px; height: 1px; margin: 2px 0 3px; background: #bbb; }
.side .glyph { font: 18px/22px "Liberation Sans", sans-serif; }
.side .mtext { display: flex; justify-content: center; align-items: center; }
.mtext::before { content: ""; width: 4px; height: 13px; flex: none; border: 1px solid #111; border-width: 0 1px; }
.center { flex: 1; display: flex; flex-direction: column; min-width: 0; }
.canvas { flex: 1; width: 100%; min-height: 0; background: #000; border: 1px solid #666; border-width: 1px 0; }
.thin { fill: none; stroke: #fff; shape-rendering: crispEdges; }
.note { fill: #ff0; font: 38px "Liberation Serif", serif; }
.dim { fill: #f0f; font: 28px "Liberation Serif", serif; }
.scale { fill: #707070; font: 19px "Liberation Sans", sans-serif; text-anchor: middle; }
.models { display: flex; height: 32px; padding-left: 1px; background: #f0f0f0; }
.arrow { display: grid; place-items: center; width: 29px; height: 30px; border: 1px solid #aaa; border-width: 0 1px 1px 0; }
.arrow svg { width: 10px; height: 16px; fill: #606060; }
.model { position: relative; width: 88px; height: 29px; padding-right: 2px; font-size: 21px; line-height: 29px; }
.model svg { position: absolute; inset: 0; width: 100%; height: 100%; }
.model span { position: relative; }

.command { position: relative; border-top: 4px solid #ddd; background: #fff; }
.history { display: flex; height: 34px; border-top: 2px solid #777; border-left: 1px solid #777; border-bottom: 1px solid #999; margin-left: 2px; }
.log { flex: 1; padding-left: 9px; margin-top: -4px; font: 13px/17px "Noto Sans CJK SC", sans-serif; }
.vscroll { display: flex; flex-direction: column; justify-content: space-between; align-items: center; width: 18px; padding: 5px 0; margin-right: 1px; background: #f0f0f0; }
.vscroll svg { width: 10px; height: 6px; }
.prompt { display: flex; align-items: flex-start; height: 21px; margin-left: 2px; border-left: 1px solid #777; }
.prompt label { width: 22px; padding-left: 2px; font-size: 7px; line-height: 10px; color: #777; white-space: nowrap; }
.caret { width: 2px; height: 9px; margin: 1px 0 0 1px; background: #000; }
.prompt input { flex: 1; min-width: 0; border: 0; height: 18px; padding: 0; background: transparent; outline: 0; }
.hscroll { display: flex; align-items: center; width: 72px; height: 18px; margin-right: 30px; background: #f0f0f0; }
.hscroll svg { width: 6px; height: 10px; }
.hscroll i { width: 16px; height: 16px; margin: 0 auto 0 4px; background: #cdcdcd; }
.promo { position: absolute; top: -3px; right: -4px; display: flex; flex-direction: column; font-size: 20px; line-height: 32px; }
.promo a { color: #00f; white-space: nowrap; }

.status { display: flex; align-items: center; height: 30px; padding: 1px 4px 1px 4px; gap: 2px; background: #f0f0f0; font-size: 21px; line-height: 25px; white-space: nowrap; }
.coords { width: 447px; }
.status button { height: 26px; padding: 0 7px 0 1px; border: 1px solid transparent; text-align: left; }
.status .on { border-color: #0078d7; background: #dcebf7; }
.status .dyn { width: 56px; }
.feedback { margin-left: 2px; color: #00f; }
.brand { display: flex; align-items: center; height: 18px; margin-left: auto; background: #fff; color: #111; font-size: 13px; font-weight: 500; line-height: 18px; padding: 0 4px 0 1px; }
.brand svg { width: 18px; height: 16px; margin-right: 5px; }
.brand em { font-style: normal; color: #354160; }
```
